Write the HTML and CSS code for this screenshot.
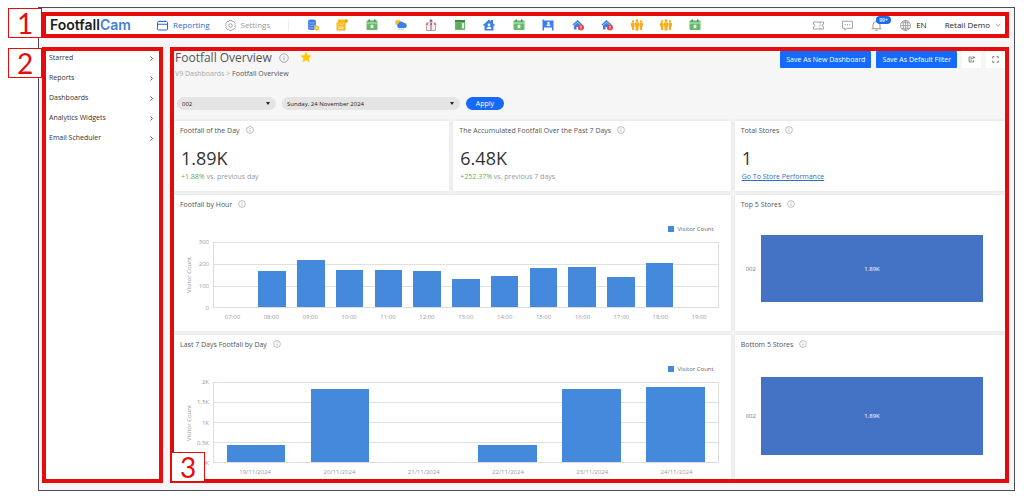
FILE: index.html
```html
<!DOCTYPE html>
<html lang="en">
<head>
    <meta charset="UTF-8">
    <meta name="viewport" content="width=device-width, initial-scale=1.0">
    <title>Footfall Overview</title>
    <link rel="stylesheet" href="styles.css">
</head>
<body>

<!-- shared icons -->
<svg class="sprite" width="0" height="0" aria-hidden="true">
    <symbol id="info" viewBox="0 0 20 20">
        <circle cx="10" cy="10" r="8.5" fill="none" stroke="currentColor" stroke-width="1.6"/>
        <path d="M10 9v5.5M10 5.4v1.8" stroke="currentColor" stroke-width="1.8"/>
    </symbol>
    <symbol id="chevron" viewBox="0 0 10 10">
        <path d="M3 1l4 4-4 4" fill="none" stroke="currentColor" stroke-width="1.5"/>
    </symbol>
    <symbol id="calendar" viewBox="0 0 24 24">
        <rect x="1" y="3" width="22" height="19" rx="2" fill="#66bb6a"/>
        <rect x="1" y="7" width="22" height="2" fill="#c8e6c9"/>
        <path d="M5 1h3v4H5zM16 1h3v4h-3z" fill="#388e3c"/>
        <path d="M12 10l1.300 3 3.200.4-2.400 2.200.7 3.300-2.800-1.600L9.200 19l.7-3.400-2.400-2.200 3.200-.4z" fill="#fff"/>
    </symbol>
    <symbol id="alert-home" viewBox="0 0 24 24">
        <path d="M1 11L11 2l10 9-1.800 2L11 5.800 2.800 13z" fill="#3d7eea"/>
        <path d="M4 13l7-6 7 6v8h-5v-5H9v5H4z" fill="#3d7eea"/>
        <circle cx="18" cy="17" r="6" fill="#e04848"/>
        <path d="M18 13.500v4M18 19v1.600" stroke="#fff" stroke-width="1.800"/>
    </symbol>
    <symbol id="people" viewBox="0 0 24 24">
        <g fill="#f9ab1c">
            <circle cx="12" cy="3.500" r="2.800"/>
            <circle cx="4" cy="5" r="2.400"/>
            <circle cx="20" cy="5" r="2.400"/>
            <path d="M8 7h8v8h-1v8H9v-8H8z"/>
            <path d="M0 8h7v7H6.300v7H2v-7H0zM17 8h7v7h-2v7h-4.300v-7H17z"/>
        </g>
    </symbol>
</svg>

<div class="window">

    <header class="topbar">
        <span class="step step-1">1</span>
        <a class="logo" href="#">Footfall<span>Cam</span></a>
        <nav class="modes">
            <a class="active" href="#">
                <svg viewBox="0 0 22 20"><rect x="1" y="2" width="20" height="17" rx="2" fill="none" stroke="currentColor" stroke-width="2"/><path d="M1 7.500h20M6 0v3M16 0v3" stroke="currentColor" stroke-width="2"/></svg>
                Reporting
            </a>
            <a href="#">
                <svg viewBox="0 0 22 22"><path d="M8.500 1h5l1 2.500 3-.5 3 4-1 2.500L21 11l-1.500 1.500 1 2.500-3 4-3-.5-1 2.500h-5l-1-2.500-3 .5-3-4 1-2.500L1 11l1.500-1.500-1-2.500 3-4 3 .5z" fill="none" stroke="currentColor" stroke-width="1.600"/><circle cx="11" cy="11" r="3.500" fill="none" stroke="currentColor" stroke-width="1.800"/></svg>
                Settings
            </a>
        </nav>
        <nav class="shortcuts" aria-label="Shortcuts">
            <a href="#" aria-label="Data source">
                <svg viewBox="0 0 24 24"><path d="M2 4c0-4 16-4 16 0v15c0 4-16 4-16 0z" fill="#3d7eea"/><path d="M2 6c2 3 14 3 16 0M2 11c2 3 14 3 16 0M2 16c2 3 14 3 16 0" fill="none" stroke="#b5cdf8" stroke-width="1.200"/><circle cx="19" cy="18" r="5" fill="#fbc02d"/><circle cx="19" cy="18" r="1.700" fill="#fff3c4"/></svg>
            </a>
            <a href="#" aria-label="Report">
                <svg viewBox="0 0 24 24"><path d="M4 1h19v6h-4v16H1V7h3z" fill="#fbb81d"/><path d="M19 1h4v6h-4z" fill="#e59a0c"/><path d="M4 13l4-4 3 3 5-5M4 16h11M4 19h11" fill="none" stroke="#fff3d0" stroke-width="1.600"/></svg>
            </a>
            <a href="#" aria-label="Calendar"><svg><use href="#calendar"/></svg></a>
            <a href="#" aria-label="Weather">
                <svg viewBox="0 0 24 24"><circle cx="6" cy="7" r="5.500" fill="#fbc02d"/><path d="M7 18a5 5 0 0 1 0-9 6 6 0 0 1 11-1 5 5 0 0 1 1 10z" fill="#3d7eea"/><path d="M9 19l-1 3M13 19l-1 3M17 19l-1 3" stroke="#7fb0f5" stroke-width="1.500"/></svg>
            </a>
            <a href="#" aria-label="Store">
                <svg viewBox="0 0 24 24"><circle cx="12" cy="3.500" r="3" fill="#5d7fb5"/><path d="M3 7h18l2 6H1z" fill="#e57373"/><path d="M7 7l-1.500 6h4L10 7zM14 7l.5 6h4L17 7z" fill="#fff"/><path d="M3 13v10h18V13" fill="#f3eef0" stroke="#a8808a" stroke-width="1.500"/><path d="M12 8v15" stroke="#78698a" stroke-width="2"/></svg>
            </a>
            <a href="#" aria-label="Ledger">
                <svg viewBox="0 0 24 24"><rect x="2" y="2" width="20" height="20" rx="1" fill="#66bb6a"/><path d="M2 4h20" stroke="#2e7d32" stroke-width="3"/><path d="M5 10h8M5 14h8M5 18h8" stroke="#43a047" stroke-width="2"/><path d="M16 8h4v9l-2 3-2-3z" fill="#e8f5e9"/></svg>
            </a>
            <a href="#" aria-label="Site">
                <svg viewBox="0 0 24 24"><path d="M0 12L12 1l4 3.600V2h4v6.300l4 3.700-1.500 1.800L21 12.500V23H3V12.500l-1.500 1.300z" fill="#3d7eea"/><circle cx="12" cy="12" r="2.800" fill="#fff"/><path d="M7 20c0-6 10-6 10 0z" fill="#fff"/></svg>
            </a>
            <a href="#" aria-label="Calendar"><svg><use href="#calendar"/></svg></a>
            <a href="#" aria-label="Desk">
                <svg viewBox="0 0 24 24"><path d="M1 1h3v2h19v20h-3v-6H4v6H1z" fill="#3d7eea"/><circle cx="13" cy="8" r="2.300" fill="#fff"/><path d="M9 14c0-5 8-5 8 0z" fill="#fff"/></svg>
            </a>
            <a href="#" aria-label="Store alert"><svg><use href="#alert-home"/></svg></a>
            <a href="#" aria-label="Store alert"><svg><use href="#alert-home"/></svg></a>
            <a href="#" aria-label="Visitors"><svg><use href="#people"/></svg></a>
            <a href="#" aria-label="Visitors"><svg><use href="#people"/></svg></a>
            <a href="#" aria-label="Calendar"><svg><use href="#calendar"/></svg></a>
        </nav>
        <div class="tools">
            <a class="tool" href="#" aria-label="Tickets">
                <svg viewBox="0 0 22 22"><path d="M1 4h20v4.500a2.500 2.500 0 0 0 0 5V18H1v-4.500a2.500 2.500 0 0 0 0-5zM14 4v3M14 9v4M14 15v3" fill="none" stroke="currentColor" stroke-width="1.500"/></svg>
            </a>
            <a class="tool" href="#" aria-label="Messages">
                <svg viewBox="0 0 22 22"><path d="M1 2.500h20v14H10l-4 4v-4H1z" fill="none" stroke="currentColor" stroke-width="1.500"/><path d="M5.500 9.500h2M10 9.500h2M14.500 9.500h2" stroke="currentColor" stroke-width="2"/></svg>
            </a>
            <a class="tool" href="#" aria-label="Notifications">
                <svg viewBox="0 0 22 22"><path d="M4 17V10a7 7 0 0 1 14 0v7M1 17.500h20M8.500 20.500h5M11 0v3" fill="none" stroke="currentColor" stroke-width="1.700"/></svg>
                <span class="count">99+</span>
            </a>
            <a class="lang" href="#">
                <svg viewBox="0 0 22 22"><g fill="none" stroke="currentColor" stroke-width="1.400"><circle cx="11" cy="11" r="10"/><ellipse cx="11" cy="11" rx="4.500" ry="10"/><path d="M1 11h20M11 1v20M3 5.500h16M3 16.500h16"/></g></svg>
                EN
            </a>
            <a class="user" href="#">
                Retail Demo
                <svg viewBox="0 0 10 10"><path d="M1 3l4 4 4-4" fill="none" stroke="currentColor" stroke-width="1.300"/></svg>
            </a>
        </div>
    </header>

    <div class="body">
        <aside class="sidebar">
            <span class="step step-2">2</span>
            <a href="#">Starred <svg><use href="#chevron"/></svg></a>
            <a href="#">Reports <svg><use href="#chevron"/></svg></a>
            <a href="#">Dashboards <svg><use href="#chevron"/></svg></a>
            <a href="#">Analytics Widgets <svg><use href="#chevron"/></svg></a>
            <a href="#">Email Scheduler <svg><use href="#chevron"/></svg></a>
        </aside>

        <main class="content">
            <span class="step step-3">3</span>

            <div class="page-head">
                <h1>Footfall Overview</h1>
                <svg class="info"><use href="#info"/></svg>
                <svg class="star" viewBox="0 0 24 24"><path d="M12 1l3.400 7.300 7.900.9-5.900 5.400 1.600 7.900-7-4-7 4 1.600-7.900L.7 9.200l7.900-.9z" fill="#ffc800"/></svg>
                <div class="actions">
                    <button class="btn">Save As New Dashboard</button>
                    <button class="btn">Save As Default Filter</button>
                    <button class="btn-icon" aria-label="Export">
                        <svg viewBox="0 0 20 20"><path d="M11 3H3v14h13v-5M7 8h5M7 12h4M12 9l5-6M13 2.500h5V7" fill="none" stroke="currentColor" stroke-width="1.800"/></svg>
                    </button>
                    <button class="btn-icon" aria-label="Full screen">
                        <svg viewBox="0 0 20 20"><path d="M2 7V2h5M13 2h5v5M18 13v5h-5M7 18H2v-5" fill="none" stroke="currentColor" stroke-width="2"/></svg>
                    </button>
                </div>
            </div>
            <div class="breadcrumb"><a href="#">V9 Dashboards</a> &gt; <span>Footfall Overview</span></div>

            <form class="filters" onsubmit="event.preventDefault();">
                <div class="picker">
                    <select aria-label="Store">
                        <option>002</option>
                    </select>
                </div>
                <div class="picker picker-date">
                    <select aria-label="Date">
                        <option>Sunday, 24 November 2024</option>
                    </select>
                </div>
                <button class="apply">Apply</button>
            </form>

            <div class="cards">
                <section class="card">
                    <h2>Footfall of the Day <svg class="info"><use href="#info"/></svg></h2>
                    <div class="value">1.89K</div>
                    <div class="change"><b>+1.88%</b> vs. previous day</div>
                </section>
                <section class="card">
                    <h2>The Accumulated Footfall Over the Past 7 Days <svg class="info"><use href="#info"/></svg></h2>
                    <div class="value">6.48K</div>
                    <div class="change"><b>+252.37%</b> vs. previous 7 days</div>
                </section>
                <section class="card">
                    <h2>Total Stores <svg class="info"><use href="#info"/></svg></h2>
                    <div class="value">1</div>
                    <div class="change"><a href="#">Go To Store Performance</a></div>
                </section>

                <section class="card card-wide">
                    <h2>Footfall by Hour <svg class="info"><use href="#info"/></svg></h2>
                    <div class="legend">Visitor Count</div>
                    <div class="chart chart-hour">
                        <div class="axis-title">Visitor Count</div>
                        <div class="ticks"><span>300</span><span>200</span><span>100</span><span>0</span></div>
                        <div class="plot">
                            <i style="height: 0%"></i>
                            <i style="height: 56%"></i>
                            <i style="height: 73%"></i>
                            <i style="height: 58%"></i>
                            <i style="height: 58%"></i>
                            <i style="height: 56%"></i>
                            <i style="height: 43%"></i>
                            <i style="height: 48%"></i>
                            <i style="height: 61%"></i>
                            <i style="height: 62%"></i>
                            <i style="height: 47%"></i>
                            <i style="height: 68%"></i>
                            <i style="height: 0%"></i>
                        </div>
                        <div class="labels">
                            <span>07:00</span><span>08:00</span><span>09:00</span><span>10:00</span><span>11:00</span><span>12:00</span><span>13:00</span><span>14:00</span><span>15:00</span><span>16:00</span><span>17:00</span><span>18:00</span><span>19:00</span>
                        </div>
                    </div>
                </section>
                <section class="card">
                    <h2>Top 5 Stores <svg class="info"><use href="#info"/></svg></h2>
                    <div class="rank rank-top"><span>002</span><div class="rank-bar">1.89K</div></div>
                </section>

                <section class="card card-wide">
                    <h2>Last 7 Days Footfall by Day <svg class="info"><use href="#info"/></svg></h2>
                    <div class="legend">Visitor Count</div>
                    <div class="chart chart-day">
                        <div class="axis-title">Visitor Count</div>
                        <div class="ticks"><span>2K</span><span>1.5K</span><span>1K</span><span>0.5K</span><span>0K</span></div>
                        <div class="plot">
                            <i style="height: 22%"></i>
                            <i style="height: 93%"></i>
                            <i style="height: 0%"></i>
                            <i style="height: 22%"></i>
                            <i style="height: 93%"></i>
                            <i style="height: 95%"></i>
                        </div>
                        <div class="labels">
                            <span>19/11/2024</span><span>20/11/2024</span><span>21/11/2024</span><span>22/11/2024</span><span>23/11/2024</span><span>24/11/2024</span>
                        </div>
                    </div>
                </section>
                <section class="card">
                    <h2>Bottom 5 Stores <svg class="info"><use href="#info"/></svg></h2>
                    <div class="rank rank-bottom"><span>002</span><div class="rank-bar">1.89K</div></div>
                </section>
            </div>
        </main>
    </div>
</div>

</body>
</html>
```
FILE: styles.css
```css
* {
    box-sizing: border-box;
}

body {
    margin: 0;
    min-height: 100vh;
    padding: 7px 9px 8px 38px;
    display: flex;
    background-color: #fff;
    font-family: "Open Sans", "Noto Sans", sans-serif;
    font-size: 7px;
    line-height: 10px;
    color: #333;
}

a {
    color: inherit;
    text-decoration: none;
}

button, select {
    font-family: inherit;
    font-size: inherit;
    border: none;
    padding: 0;
    cursor: pointer;
}

svg {
    display: block;
    flex: none;
}

.sprite {
    position: absolute;
}

.window {
    flex: 1;
    min-width: 0;
    display: flex;
    flex-direction: column;
    border: 1px solid #4a4e58;
    background-color: #f6f6f6;
}

/* numbered callouts */
.topbar, .sidebar, .content {
    position: relative;
    border: 4px solid #e60c0c;
}

.step {
    position: absolute;
    z-index: 1;
    width: 34px;
    height: 30px;
    border: 1px solid #e60c0c;
    background-color: #fff;
    color: #e60c0c;
    font-family: Lato, sans-serif;
    font-size: 28px;
    line-height: 28px;
    text-align: center;
}

.step-1 {
    top: -8px;
    left: -38px;
}

.step-2 {
    top: -3px;
    left: -38px;
}

.step-3 {
    bottom: -3px;
    left: -3px;
}

/* top bar */
.topbar {
    margin: 4px 5px 9px 3px;
    height: 26px;
    padding: 0 4px;
    display: flex;
    align-items: center;
    background-color: #fff;
    font-size: 8px;
}

.logo {
    width: 107px;
    font-family: Inter, sans-serif;
    font-size: 14px;
    font-weight: 600;
    color: #1c1c22;
}

.logo span {
    color: #4580d0;
}

.modes {
    display: flex;
    gap: 15px;
    padding-right: 18px;
    border-right: 1px solid #eee;
    color: #999;
}

.modes a {
    display: flex;
    align-items: center;
    gap: 5px;
}

.modes svg {
    width: 11px;
    height: 11px;
}

.modes .active {
    color: #2c66cc;
    font-weight: 500;
}

.shortcuts {
    flex: 0 1 412px;
    margin-left: 9px;
    display: flex;
}

.shortcuts a {
    flex: 1;
    display: flex;
    justify-content: center;
}

.shortcuts svg {
    width: 12px;
    height: 12px;
}

.tools {
    margin-left: auto;
    display: flex;
    align-items: center;
    gap: 18px;
}

.tools a {
    display: flex;
    align-items: center;
    gap: 5px;
    color: #222;
}

.tools svg {
    width: 11px;
    height: 11px;
    color: #888;
}

.tools .tool {
    position: relative;
}

.tools .user svg {
    width: 6px;
    height: 6px;
}

.count {
    position: absolute;
    top: -4px;
    left: 5px;
    padding: 0 3px;
    border-radius: 4px;
    background-color: #1a6aed;
    color: #fff;
    font-size: 5px;
    font-weight: 600;
    line-height: 8px;
}

/* side menu */
.body {
    flex: 1;
    margin: 0 5px 7px 3px;
    display: flex;
    gap: 7px;
}

.sidebar {
    flex: none;
    width: 121px;
    padding: 0 5px 0 3px;
    display: flex;
    flex-direction: column;
    gap: 6px;
    background-color: #fff;
}

.sidebar a {
    display: flex;
    justify-content: space-between;
    align-items: center;
    height: 14px;
    font-weight: 500;
}

.sidebar svg {
    width: 5px;
    height: 5px;
}

/* dashboard */
.content {
    flex: 1;
    min-width: 0;
    display: flex;
    flex-direction: column;
}

.page-head {
    display: flex;
    height: 17px;
    padding-left: 1px;
}

h1 {
    margin: 0 7px 0 0;
    font-size: 12px;
    font-weight: 500;
    line-height: 14px;
    color: #555;
}

.info {
    width: 8px;
    height: 8px;
    color: #999;
}

.page-head .info {
    width: 10px;
    height: 10px;
    margin-top: 2px;
}

.star {
    width: 12px;
    height: 12px;
    margin-left: 11px;
}

.actions {
    margin-left: auto;
    display: flex;
    gap: 5px;
}

.btn {
    height: 17px;
    padding: 0 6px;
    border-radius: 1px;
    background-color: #166afb;
    color: #fff;
}

.btn-icon {
    width: 19px;
    height: 17px;
    display: flex;
    align-items: center;
    justify-content: center;
    background-color: #fff;
    color: #444;
}

.btn-icon svg {
    width: 7px;
    height: 7px;
}

.breadcrumb {
    padding-left: 1px;
    line-height: 12px;
    color: #aaa;
}

.breadcrumb span {
    color: #555;
}

.filters {
    margin: 17px 3px 11px;
    display: flex;
    gap: 6px;
}

.picker {
    position: relative;
    width: 99px;
}

.picker::after {
    content: "";
    position: absolute;
    top: 5px;
    right: 6px;
    border: 2px solid transparent;
    border-top: 3px solid #222;
    border-bottom: none;
    pointer-events: none;
}

.picker-date {
    width: 178px;
}

.picker select {
    display: block;
    width: 100%;
    height: 13px;
    padding: 0 5px;
    border-radius: 7px;
    appearance: none;
    background-color: #e4e4e4;
    color: #222;
    font-size: 6px;
}

.apply {
    width: 38px;
    height: 13px;
    border-radius: 7px;
    background-color: #166afb;
    color: #fff;
}

.cards {
    flex: 1;
    display: grid;
    grid-template-columns: 276fr 278fr 271fr;
    grid-template-rows: auto auto 1fr;
    gap: 4px;
}

.card {
    display: flex;
    flex-direction: column;
    padding: 5px 12px 2px 6px;
    background-color: #fff;
    box-shadow: 0 0 3px rgba(0, 0, 0, 0.12);
}

.card-wide {
    grid-column: span 2;
}

h2 {
    margin: 0;
    display: flex;
    gap: 6px;
    font-size: 7px;
    font-weight: 400;
    line-height: 10px;
    color: #555;
}

.value {
    margin: 10px 1px 2px;
    font-size: 18px;
    line-height: 24px;
}

.change {
    margin-bottom: 7px;
    padding-left: 1px;
    color: #999;
}

.change b {
    font-weight: 400;
    color: #5fae50;
}

.change a {
    color: #2e6fc4;
    text-decoration: underline;
}

/* bar charts */
.legend {
    margin: 14px 5px 8px;
    display: flex;
    align-items: center;
    justify-content: flex-end;
    gap: 4px;
    font-size: 6px;
    color: #666;
}

.legend::before {
    content: "";
    width: 6px;
    height: 6px;
    background-color: #4589dc;
}

.chart {
    display: grid;
    grid-template-columns: 18px 11px 1fr;
    column-gap: 2px;
    color: #999;
    font-size: 6px;
}

.chart-hour {
    margin-bottom: 7px;
}

.axis-title {
    writing-mode: vertical-rl;
    transform: rotate(180deg);
    line-height: 18px;
    text-align: center;
    white-space: nowrap;
}

.ticks {
    margin: -5px 0;
    padding-right: 2px;
    display: flex;
    flex-direction: column;
    justify-content: space-between;
    align-items: flex-end;
}

.plot {
    display: flex;
    align-items: flex-end;
    border: 1px solid #ddd;
    background-image: linear-gradient(#e0e0e0 1px, transparent 1px);
    background-position: 0 -1px;
}

.chart-hour .plot {
    height: 66px;
    background-size: 100% 22px;
}

.chart-day .plot {
    height: 81px;
    background-size: 100% 20px;
}

.plot i {
    flex: 1;
    margin: 0 1.1%;
    background-color: #4589dc;
}

.chart-day .plot i {
    margin: 0 2.5%;
}

.labels {
    grid-column: 3;
    margin-top: 4px;
    display: flex;
}

.labels span {
    flex: 1;
    text-align: center;
}

.rank {
    flex: 1;
    display: flex;
    align-items: center;
    gap: 5px;
    padding: 0 10px 0 5px;
    font-size: 6px;
    color: #777;
}

.rank-top {
    margin: 25px 0 27px;
}

.rank-bottom {
    margin: 27px 0 22px;
}

.rank-bar {
    flex: 1;
    align-self: stretch;
    display: flex;
    align-items: center;
    justify-content: center;
    background-color: #4472c4;
    color: #fff;
}
```
